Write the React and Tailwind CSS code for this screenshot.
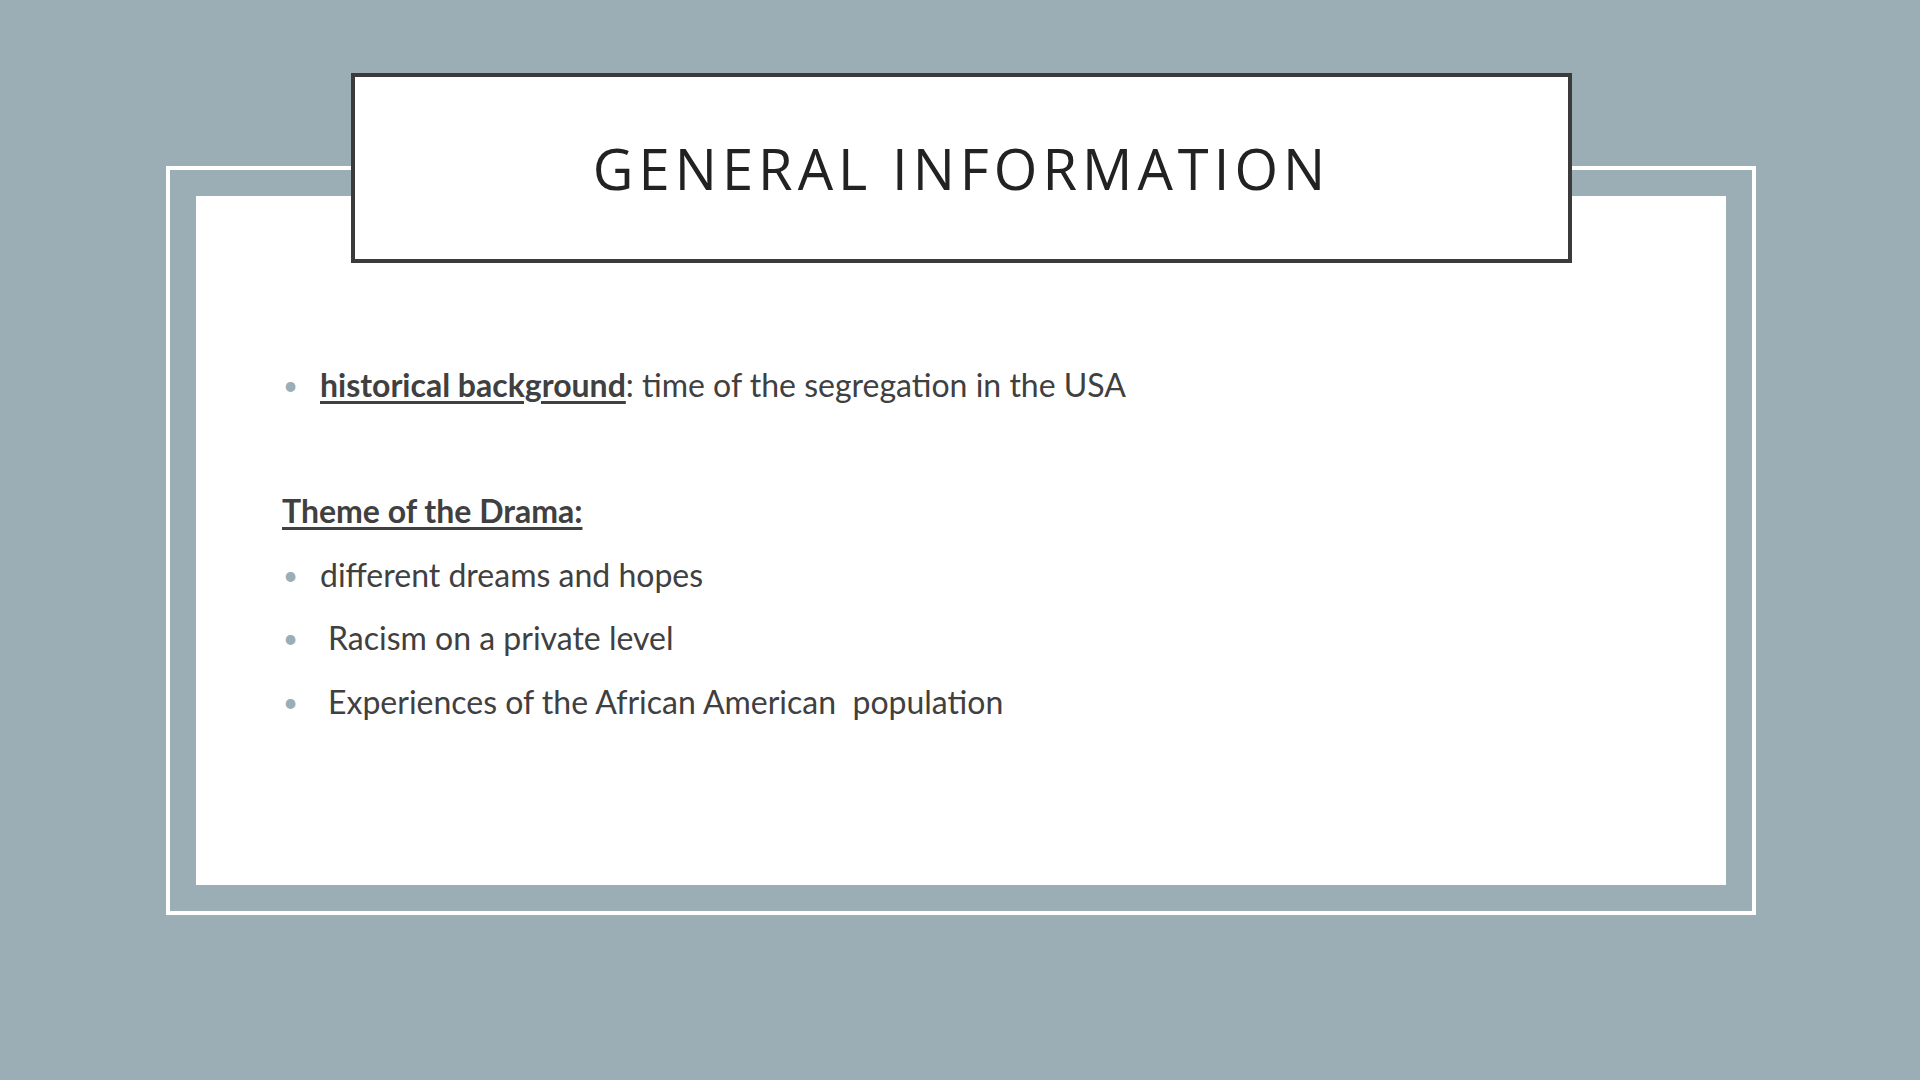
export default function App() {
  const font = { fontFamily: 'Lato, "Noto Sans", sans-serif' };
  return (
    <div className="relative w-[1920px] h-[1080px] bg-[#9caeb5] overflow-hidden" style={font}>
      <div className="absolute left-[166px] top-[166px] w-[1590px] h-[749px] border-[4px] border-white p-[26px]">
        <div className="w-full h-full bg-white pl-[87px] pt-[164px] text-[#404040] text-[32px]">
          <div className="flex items-center h-[50px]">
            <span className="w-[37px] text-[#9caeb5] text-[26px]">•</span>
            <span><span className="font-bold underline underline-offset-4">historical background</span>: time of the segregation in the USA</span>
          </div>
          <div className="mt-[76px] h-[50px] flex items-center font-bold underline underline-offset-4 -ml-[1px]">Theme of the Drama:</div>
          <div className="flex items-center h-[50px] mt-[14px]">
            <span className="w-[37px] text-[#9caeb5] text-[26px]">•</span>
            <span>different dreams and hopes</span>
          </div>
          <div className="flex items-center h-[50px] mt-[13px]">
            <span className="w-[37px] text-[#9caeb5] text-[26px]">•</span>
            <span className="pl-[8px]">Racism on a private level</span>
          </div>
          <div className="flex items-center h-[50px] mt-[14px]">
            <span className="w-[37px] text-[#9caeb5] text-[26px]">•</span>
            <span className="pl-[8px] whitespace-pre">Experiences of the African American  population</span>
          </div>
        </div>
      </div>
      <div className="absolute left-[351px] top-[73px] w-[1221px] h-[190px] bg-white border-[4px] border-[#3b3b3b] flex items-center justify-center">
        <span className="text-[56px] tracking-[0.09em] text-[#222]" style={{ fontFamily: '"Open Sans", Lato, sans-serif' }}>GENERAL INFORMATION</span>
      </div>
    </div>
  );
}
